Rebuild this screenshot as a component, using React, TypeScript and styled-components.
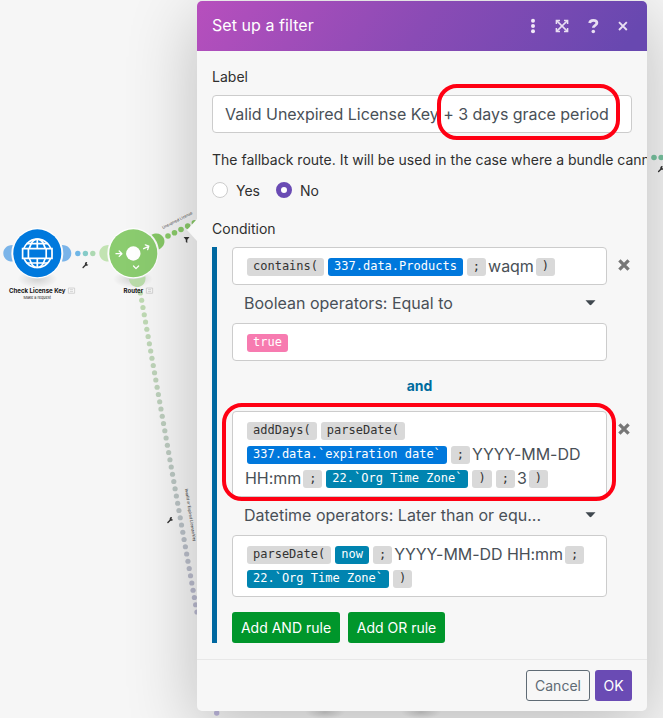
import React from "react";
import styled, { createGlobalStyle, css } from "styled-components";

const GlobalStyle = createGlobalStyle`
  html, body { margin: 0; padding: 0; overflow: hidden; }
  *, *::before, *::after { box-sizing: border-box; }
  body { font-family: Inter, "Liberation Sans", sans-serif; background: #f6f6f6; }
`;

const Stage = styled.main`
  position: relative;
  width: 663px;
  height: 718px;
  overflow: hidden;
  padding: 1px 0 0 197px;
  background: #f6f6f6;
`;

const Scenario = styled.svg`
  position: absolute;
  inset: 0;
  font-family: Inter, "Liberation Sans", sans-serif;
`;

const Dialog = styled.section`
  position: relative;
  display: flex;
  flex-direction: column;
  width: 450px;
  height: 710px;
  border-radius: 5px;
  background: #f7f7f7;
  box-shadow: 0 16px 70px rgba(0, 0, 0, 0.24);
`;

const Pointer = styled.svg`
  position: absolute;
  left: -10px;
  top: 218px;
`;

const Header = styled.header`
  display: flex;
  align-items: center;
  height: 50px;
  padding: 0 15px;
  border-radius: 5px 5px 0 0;
  color: #fff;
  background: linear-gradient(125deg, #b74fbd 0%, #8a4bb5 50%, #6848b0 95%);
`;

const Title = styled.h1`
  flex: 1;
  margin: 0 0 2px;
  font-size: 16px;
  font-weight: 400;
  line-height: 24px;
  letter-spacing: 0.06px;
`;

const HeaderIcons = styled.svg`
  display: block;
`;

const Body = styled.div`
  height: 609px;
  padding: 16px 0 0 15px;
  overflow: hidden;
  border-bottom: 1px solid #e8e8e8;
`;

const Caption = styled.div<{ $gap?: number }>`
  height: 20px;
  margin-bottom: ${(p) => p.$gap ?? 0}px;
  font-size: 14px;
  line-height: 20px;
  letter-spacing: 0.01px;
  white-space: nowrap;
  color: #2f2f2f;
`;

const TextField = styled.div`
  width: 420px;
  height: 38px;
  padding: 6px 12px;
  margin-bottom: 17px;
  border: 1px solid #ccc;
  border-radius: 4px;
  background: #fff;
  color: #495057;
  font-size: 16px;
  line-height: 24px;
  letter-spacing: -0.035px;
  white-space: nowrap;
`;

const Options = styled.div`
  display: flex;
  height: 20px;
  margin-bottom: 19px;
`;

const Option = styled.label`
  display: flex;
  align-items: flex-start;
  width: 64px;
  gap: 8px;
  font-size: 14px;
  line-height: 22px;
  color: #2f2f2f;
`;

const Radio = styled.span<{ $checked?: boolean }>`
  width: 16px;
  height: 16px;
  margin-top: 2px;
  border-radius: 50%;
  background: #fff;
  border: ${(p) => (p.$checked ? "5px solid #6a4bb4" : "1px solid #ccc")};
`;

const Conditions = styled.div`
  display: flex;
  flex-direction: column;
  height: 396px;
  padding-left: 15px;
  border-left: 5px solid #0068a0;
`;

const Rule = styled.div`
  display: flex;
  gap: 10px;
`;

const Expression = styled.div`
  width: 375px;
  padding: 6px 12px;
  border: 1px solid #ccc;
  border-radius: 4px;
  background: #fff;
`;

const Line = styled.div`
  display: flex;
  align-items: center;
  height: 24px;
  white-space: pre;
  font-size: 16px;
  line-height: 24px;
  letter-spacing: -0.06px;
  color: #495057;
`;

const tones = { grey: "#d9d9d9", blue: "#0078dc", teal: "#0084b0", pink: "#f77bb0" };

const Tag = styled.span<{ $tone?: keyof typeof tones }>`
  height: 18px;
  margin: 2px 2px 0;
  padding: 0 6px;
  border-radius: 3px;
  font: 12px/17px "DejaVu Sans Mono", monospace;
  letter-spacing: 0;
  background: ${(p) => tones[p.$tone ?? "grey"]};
  color: ${(p) => (p.$tone ? "#fff" : "#333")};
`;

const Select = styled.div`
  display: flex;
  align-items: center;
  justify-content: space-between;
  width: 375px;
  height: 38px;
  padding: 0 11px 3px 12px;
  font-size: 16px;
  color: #495057;
`;

const Remove = styled.svg`
  margin-top: 11px;
`;

const Joiner = styled.div`
  width: 375px;
  height: 50px;
  font-size: 14px;
  font-weight: 700;
  line-height: 50px;
  text-align: center;
  color: #006c9e;
`;

const Actions = styled.div<{ $footer?: boolean }>`
  display: flex;
  gap: 8px;
  margin-top: 15px;
  ${(p) =>
    p.$footer &&
    css`
      justify-content: flex-end;
      gap: 5px;
      margin: 10px 15px 0;
    `}
`;

const Button = styled.button<{ $kind: "add" | "cancel" | "ok"; $w: number }>`
  width: ${(p) => p.$w}px;
  height: 31px;
  padding: 0;
  border-radius: 3px;
  font: 14px/21px Inter, sans-serif;
  letter-spacing: 0;
  white-space: nowrap;
  color: ${(p) => (p.$kind === "cancel" ? "#5f6b75" : "#fff")};
  border: ${(p) => (p.$kind === "cancel" ? "1px solid #5f6b75" : "0")};
  background: ${(p) => ({ add: "#00962b", cancel: "transparent", ok: "#6a4bb4" })[p.$kind]};
`;

const Highlight = styled.div<{ $x: number; $y: number; $w: number; $h: number; $r: number }>`
  position: absolute;
  left: ${(p) => p.$x}px;
  top: ${(p) => p.$y}px;
  width: ${(p) => p.$w}px;
  height: ${(p) => p.$h}px;
  border: 4px solid #ff0013;
  border-radius: ${(p) => p.$r}px;
`;

const Wrench = ({ x, y }: { x: number; y: number }) => (
  <g transform={`translate(${x} ${y})`}>
    <path d="M-2.4 2.4 L0.8 -0.8" stroke="#333" strokeWidth="1.4" strokeLinecap="round" />
    <path d="M1.8 -2.7 A1.8 1.8 0 1 0 2.8 -0.4 L1.4 -0.4 L1.1 -1.6 Z" fill="#333" />
  </g>
);

const Ear = ({ cx, angle, color }: { cx: number; angle: number; color: string }) => (
  <path
    transform={`translate(${cx} 253.3) rotate(${angle})`}
    d="M24.6 -8.3 C31 -8.3 34 -4 34 0 C34 4 31 8.3 24.6 8.3 A26 26 0 0 0 24.6 -8.3Z"
    fill={color}
  />
);

const RemoveIcon = () => (
  <Remove width="14" height="14" viewBox="0 0 14 14">
    <path d="M2.4 2.4 L11.6 11.6 M11.6 2.4 L2.4 11.6" stroke="#777" strokeWidth="3.3" />
  </Remove>
);

const Caret = () => (
  <svg width="11" height="6" viewBox="0 0 11 6">
    <path d="M0.5 0.3H10.5L6.4 4.8Q5.5 5.6 4.6 4.8Z" fill="#40484f" />
  </svg>
);

const mix = (t: number) => {
  const a = [191, 220, 178];
  const b = [186, 185, 208];
  return `rgb(${a.map((v, i) => Math.round(v + (b[i] - v) * t)).join(",")})`;
};

const routeDots = Array.from({ length: 45 }, (_, i) => ({ x: 140.4 + i * 1.285, y: 293 + i * 7.25, c: mix(i / 44) }));

const Diagram = () => (
  <Scenario width="663" height="718" viewBox="0 0 663 718">
    <defs>
      <radialGradient id="ground">
        <stop offset="0" stopColor="#000" stopOpacity=".15" />
        <stop offset="1" stopColor="#000" stopOpacity="0" />
      </radialGradient>
    </defs>
    <ellipse cx="37.5" cy="279" rx="20" ry="9" fill="url(#ground)" />
    <ellipse cx="133" cy="279" rx="20" ry="9" fill="url(#ground)" />
    <ellipse cx="325" cy="712" rx="20" ry="7" fill="url(#ground)" />
    <ellipse cx="421" cy="712" rx="20" ry="7" fill="url(#ground)" />
    <circle cx="216.7" cy="713" r="2.7" fill="#bcb6dc" />
    {routeDots.map((d, i) => (
      <circle key={i} cx={d.x} cy={d.y} r="2.6" fill={d.c} />
    ))}
    {[[168, 236], [174.5, 232.8], [181, 229.5], [187.7, 226.1], [194.4, 222.7]].map(([x, y]) => (
      <circle key={x} cx={x} cy={y} r="2.8" fill="#8acb69" />
    ))}
    <Ear cx={37.3} angle={180} color="#7ab4e9" />
    <Ear cx={37.3} angle={0} color="#7ab4e9" />
    <Ear cx={133.3} angle={180} color="#c2e3b2" />
    <Ear cx={133.3} angle={-27} color="#86c866" />
    <Ear cx={133.3} angle={81} color="#badcaa" />
    <circle cx="37.3" cy="253.3" r="25.2" fill="#fff" />
    <circle cx="133.3" cy="253.3" r="25.2" fill="#fff" />
    <circle cx="37.3" cy="253.3" r="24" fill="#0079dd" />
    <circle cx="133.3" cy="253.3" r="24" fill="#8bcc6f" />
    <g fill="none" stroke="#fff" strokeWidth="1.7">
      <circle cx="37.3" cy="253.3" r="14.2" />
      <ellipse cx="37.3" cy="253.3" rx="8.4" ry="14.2" />
      <path d="M37.3 239V268 M26.5 243.6H48.1 M26.5 263H48.1" />
      <path d="M22.6 248.6H52V258.4H22.6Z" fill="#0079dd" />
      <path d="M28.4 248.6V258.4 M46.2 248.6V258.4" />
    </g>
    <circle cx="77.8" cy="253.5" r="2.7" fill="#6fb6e6" />
    <circle cx="85.4" cy="253.5" r="2.7" fill="#86cbc8" />
    <circle cx="92.8" cy="253.5" r="2.7" fill="#add9b2" />
    <circle cx="133.3" cy="253.5" r="7.2" fill="#fff" />
    <g fill="none" stroke="#fff" strokeWidth="1.3" strokeLinecap="round" strokeLinejoin="round">
      <path d="M116 253.7H121.7 M119.2 251L121.9 253.7L119.2 256.4" />
      <path d="M143.7 248.7L148.6 246.3 M145.3 244.8L148.8 246.2L147.6 249.7" />
      <path d="M133.5 266L136 268.6L138.6 266" />
    </g>
    <Wrench x={85.5} y={265} />
    <Wrench x={170.3} y={520} />
    <Wrench x={661} y={169} />
    <circle cx="654" cy="157.5" r="2.8" fill="#78c3a0" />
    <circle cx="661.2" cy="157.5" r="2.8" fill="#78c3a0" />
    <path d="M183.6 237H189.5L187.3 239.8V243L185.8 242V239.8Z" fill="#333" />
    <text x="9" y="293" fontSize="6.4" fontWeight="700" fill="#111" textLength="56.5" lengthAdjust="spacingAndGlyphs">Check License Key</text>
    <text x="23.5" y="299.2" fontSize="4" fill="#222" textLength="27.5" lengthAdjust="spacingAndGlyphs">Make a request</text>
    <text x="123.5" y="293" fontSize="6.4" fontWeight="700" fill="#111" textLength="19.7" lengthAdjust="spacingAndGlyphs">Router</text>
    <g fill="none" stroke="#ccc" strokeWidth=".8">
      <path d="M68.4 288H74.6V293.3H68.4Z M70 289.7H73 M70 291.6H73" />
      <path d="M146.4 288H152.6V293.3H146.4Z M148 289.7H151 M148 291.6H151" />
    </g>
    <text transform="translate(163 229) rotate(-27)" fontSize="3.8" fill="#444" textLength="33.5" lengthAdjust="spacingAndGlyphs">Unexpired License</text>
    <text transform="translate(185 489) rotate(81)" fontSize="4" fill="#333" textLength="53" lengthAdjust="spacingAndGlyphs">Invalid or Expired License Key</text>
  </Scenario>
);

export default function App() {
  return (
    <>
      <GlobalStyle />
      <Stage>
        <Diagram />
        <Dialog>
          <Pointer width="10" height="22" viewBox="0 0 10 22">
            <path d="M10 0V22L0 11Z" fill="#f7f7f7" />
          </Pointer>
          <Header>
            <Title>Set up a filter</Title>
            <HeaderIcons width="106" height="20" viewBox="0 0 106 20">
              <g fill="#f1e8f7">
                <circle cx="7" cy="4.8" r="2" />
                <circle cx="7" cy="10" r="2" />
                <circle cx="7" cy="15.2" r="2" />
              </g>
              <g fill="none" stroke="#e8def2" strokeWidth="1.5">
                <path d="M30.4 8V4.4H34 M38 4.4H41.6V8 M41.6 12V15.6H38 M34 15.6H30.4V12" />
                <path d="M30.6 4.6L41.4 15.4 M41.4 4.6L30.6 15.4" />
                <path d="M63.6 7.1C64 4.9 65.6 4.4 67.2 4.4C69.4 4.4 70.9 5.4 70.9 7.1C70.9 9.5 67.3 9.2 67.3 11.8" strokeWidth="2.8" />
                <path d="M93 6.2L100.8 14 M100.8 6.2L93 14" strokeWidth="1.9" />
              </g>
              <circle cx="67.3" cy="15.5" r="1.8" fill="#e8def2" />
            </HeaderIcons>
          </Header>
          <Body>
            <Caption $gap={8}>Label</Caption>
            <TextField>Valid Unexpired License Key + 3 days grace period</TextField>
            <Caption $gap={10}>The fallback route. It will be used in the case where a bundle cann</Caption>
            <Options>
              <Option><Radio />Yes</Option>
              <Option><Radio $checked />No</Option>
            </Options>
            <Caption $gap={8}>Condition</Caption>
            <Conditions>
              <Rule>
                <Expression>
                  <Line><Tag>contains(</Tag><Tag $tone="blue">337.data.Products</Tag><Tag>;</Tag>waqm<Tag>)</Tag></Line>
                </Expression>
                <RemoveIcon />
              </Rule>
              <Select>Boolean operators: Equal to<Caret /></Select>
              <Expression><Line><Tag $tone="pink">true</Tag></Line></Expression>
              <Joiner>and</Joiner>
              <Rule>
                <Expression>
                  <Line><Tag>addDays(</Tag><Tag>parseDate(</Tag></Line>
                  <Line><Tag $tone="blue">337.data.`expiration date`</Tag><Tag>;</Tag>YYYY-MM-DD</Line>
                  <Line>HH:mm<Tag>;</Tag><Tag $tone="teal">22.`Org Time Zone`</Tag><Tag>)</Tag><Tag>;</Tag>3<Tag>)</Tag></Line>
                </Expression>
                <RemoveIcon />
              </Rule>
              <Select>Datetime operators: Later than or equ...<Caret /></Select>
              <Expression>
                <Line><Tag>parseDate(</Tag><Tag $tone="teal">now</Tag><Tag>;</Tag>YYYY-MM-DD HH:mm<Tag>;</Tag></Line>
                <Line><Tag $tone="teal">22.`Org Time Zone`</Tag><Tag>)</Tag></Line>
              </Expression>
              <Actions>
                <Button $kind="add" $w={108}>Add AND rule</Button>
                <Button $kind="add" $w={97}>Add OR rule</Button>
              </Actions>
            </Conditions>
          </Body>
          <Actions $footer>
            <Button $kind="cancel" $w={64}>Cancel</Button>
            <Button $kind="ok" $w={37}>OK</Button>
          </Actions>
        </Dialog>
        <Highlight $x={437} $y={84} $w={183} $h={56} $r={20} />
        <Highlight $x={222} $y={403} $w={394} $h={98} $r={20} />
      </Stage>
    </>
  );
}
